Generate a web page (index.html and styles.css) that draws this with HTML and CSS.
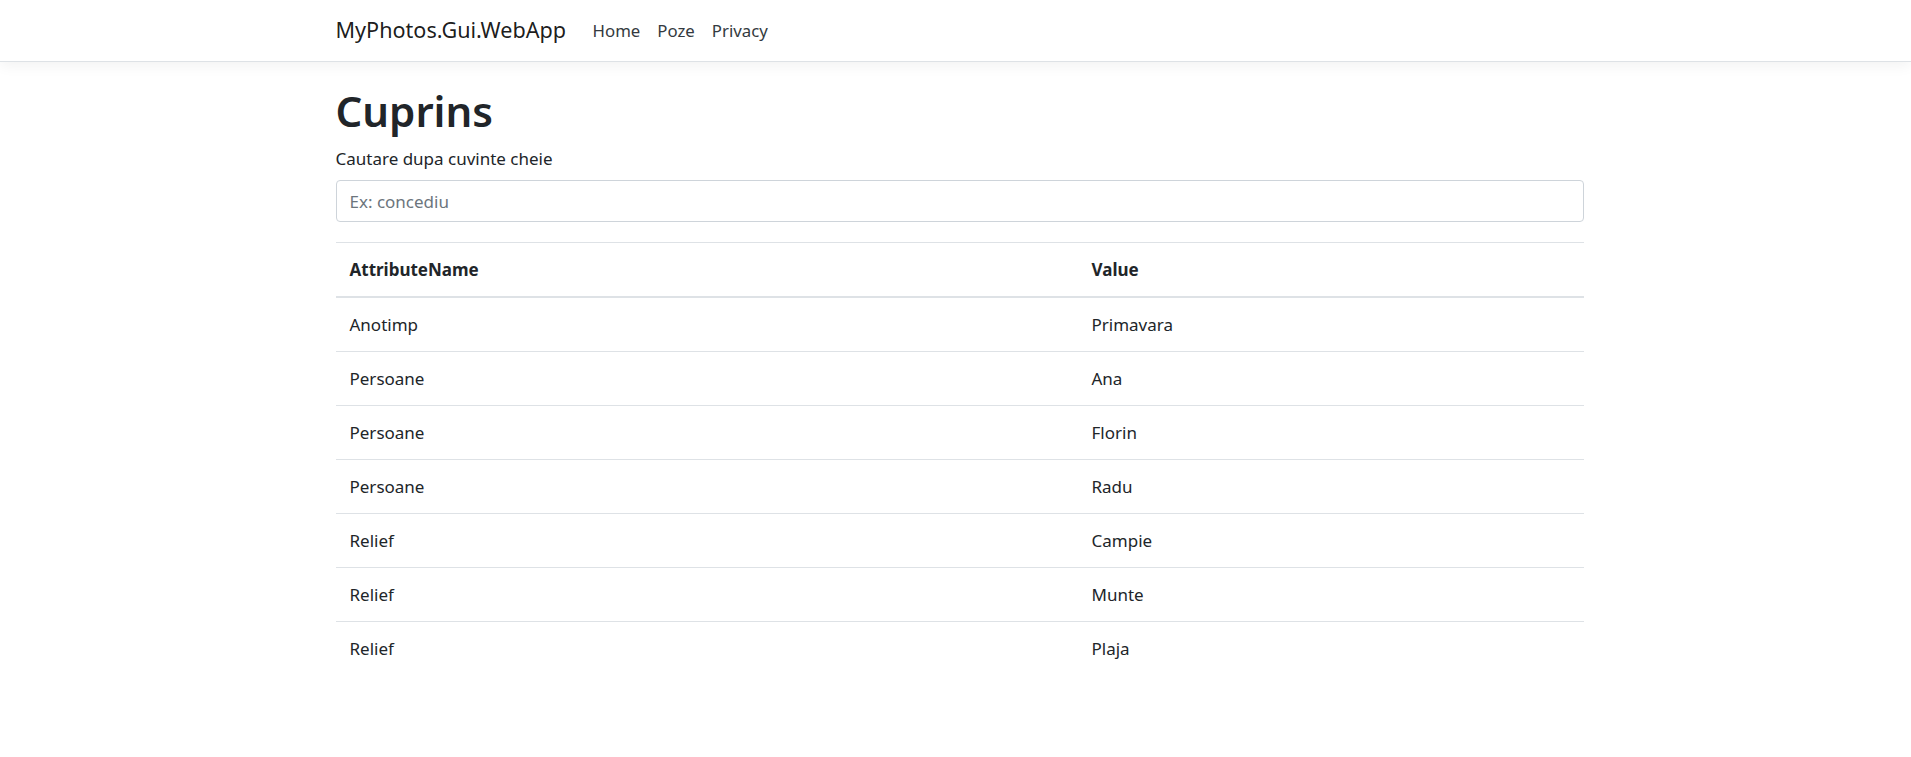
FILE: index.html
```html
<!DOCTYPE html>
<html lang="ro">
<head>
<meta charset="utf-8">
<title>Cuprins - MyPhotos.Gui.WebApp</title>
<link rel="stylesheet" href="styles.css">
</head>
<body>
<header class="topbar">
  <nav class="topbar-inner">
    <a class="brand" href="#">MyPhotos.Gui.WebApp</a>
    <ul class="nav-links">
      <li><a href="#">Home</a></li>
      <li><a href="#">Poze</a></li>
      <li><a href="#">Privacy</a></li>
    </ul>
  </nav>
</header>
<main class="content">
  <h1 class="title">Cuprins</h1>
  <label class="search-label" for="q">Cautare dupa cuvinte cheie</label>
  <input class="search-input" id="q" type="text" placeholder="Ex: concediu">
  <table class="attr-table">
    <thead>
      <tr><th class="col-name">AttributeName</th><th>Value</th></tr>
    </thead>
    <tbody>
      <tr><td>Anotimp</td><td>Primavara</td></tr>
      <tr><td>Persoane</td><td>Ana</td></tr>
      <tr><td>Persoane</td><td>Florin</td></tr>
      <tr><td>Persoane</td><td>Radu</td></tr>
      <tr><td>Relief</td><td>Campie</td></tr>
      <tr><td>Relief</td><td>Munte</td></tr>
      <tr><td>Relief</td><td>Plaja</td></tr>
    </tbody>
  </table>
</main>
</body>
</html>
```
FILE: styles.css
```css
* { box-sizing: border-box; }
html, body { margin: 0; padding: 0; }
body {
  font-family: "Noto Sans", "Open Sans", "Liberation Sans", sans-serif;
  font-size: 17px;
  line-height: 1.5;
  color: #212529;
  background: #fff;
}
.topbar {
  height: 62px;
  border-bottom: 1px solid #dee2e6;
  box-shadow: 0 4px 13px rgba(0, 0, 0, 0.05);
  background: #fff;
}
.topbar-inner {
  width: 1248px;
  margin-left: calc(50% - 620px);
  height: 61px;
  display: flex;
  align-items: center;
}
.brand {
  font-size: 21.6px;
  color: rgba(0, 0, 0, 0.9);
  text-decoration: none;
  margin-right: 18px;
}
.nav-links {
  list-style: none;
  margin: 0;
  padding: 0;
  display: flex;
}
.nav-links a {
  display: block;
  padding: 8px 8.5px;
  font-size: 16.8px;
  color: #343a40;
  text-decoration: none;
}
.content {
  width: 1248px;
  margin-left: calc(50% - 620px);
  padding-top: 23px;
}
.title {
  margin: 0 0 9px;
  font-size: 42px;
  font-weight: 600;
  line-height: 1.23;
}
.search-label {
  display: block;
  margin-bottom: 9px;
  font-size: 17px;
}
.search-input {
  display: block;
  width: 100%;
  height: 42px;
  padding: 6px 13px;
  font: inherit;
  font-size: 17px;
  color: #495057;
  border: 1px solid #ced4da;
  border-radius: 4px;
  margin-bottom: 20px;
}
.search-input::placeholder { color: #6c757d; }
.attr-table {
  width: 100%;
  border-collapse: collapse;
}
.attr-table th,
.attr-table td {
  text-align: left;
  padding: 13px 14px;
  border-top: 1px solid #dee2e6;
  font-size: 17px;
  line-height: 27px;
}
.attr-table th { font-weight: 700; }
.attr-table thead th { border-bottom: 2px solid #dee2e6; }
.attr-table .col-name { width: 742px; }
```
